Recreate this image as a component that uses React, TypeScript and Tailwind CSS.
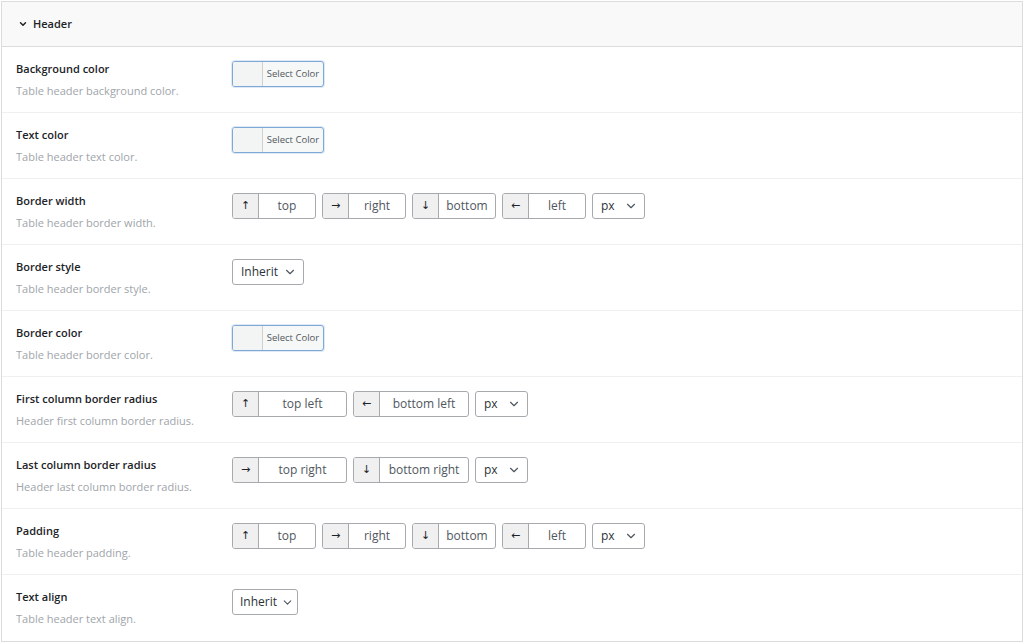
import React from 'react';
import { ChevronDown } from 'lucide-react';

type Side = { arrow: string; label: string; w: string };

const sides4: Side[] = [
  { arrow: '↑', label: 'top', w: 'w-[84px]' },
  { arrow: '→', label: 'right', w: 'w-[84px]' },
  { arrow: '↓', label: 'bottom', w: 'w-[84px]' },
  { arrow: '←', label: 'left', w: 'w-[84px]' },
];

const ColorButton = () => (
  <div className="flex h-[26px] w-[92px] overflow-hidden rounded-[3px] border border-[#7ea9d6] bg-[#f6f7f7] shadow-[0_0_0_1px_rgba(126,169,214,0.25)]">
    <div className="w-[30px] border-r border-[#d0d0d0] bg-[#f3f4f4]" />
    <div className="flex flex-1 items-center justify-center text-[9.5px] text-[#50575e]">Select Color</div>
  </div>
);

const Select = ({ value, w, tight }: { value: string; w: string; tight?: boolean }) => (
  <div className={`flex h-[26px] ${w} items-center justify-between rounded-[3px] border border-[#a7aaad] bg-white ${tight ? 'pl-[7px] pr-[3px]' : 'pl-2 pr-[6px]'} text-[12px] text-[#2c3338]`}>
    <span>{value}</span>
    <ChevronDown size={tight ? 13 : 14} strokeWidth={2} className="text-[#50575e]" />
  </div>
);

const SideInput = ({ side }: { side: Side }) => (
  <div className={`flex h-[26px] ${side.w} overflow-hidden rounded-[3px] border border-[#a7aaad] bg-white`}>
    <div className="flex w-[26px] items-center justify-center border-r border-[#a7aaad] bg-[#f0f0f1] text-[11px] text-[#1d2327] [font-family:'DejaVu_Sans',sans-serif]">
      {side.arrow}
    </div>
    <div className="flex flex-1 items-center justify-center text-[12px] text-[#50575e]">{side.label}</div>
  </div>
);

const Sides = ({ items }: { items: Side[] }) => (
  <div className="flex gap-[6px]">
    {items.map((s) => (
      <SideInput key={s.label} side={s} />
    ))}
    <Select value="px" w="w-[53px]" />
  </div>
);

const Row = ({ title, desc, children, last }: { title: string; desc: string; children: React.ReactNode; last?: boolean }) => (
  <div className={`flex h-[66px] pl-[14px] pt-[14px] ${last ? '' : 'border-b border-[#f0f0f1]'}`}>
    <div className="w-[216px]">
      <div className="text-[11px] leading-4 font-semibold text-[#1d2327]">{title}</div>
      <div className="mt-[6px] text-[11px] leading-4 text-[#a0a5aa]">{desc}</div>
    </div>
    <div>{children}</div>
  </div>
);

export default function App() {
  return (
    <div className="min-h-[643px] bg-white p-px [font-family:'Open_Sans',sans-serif]">
      <div className="w-[1022px] border border-[#dcdcde] bg-white">
        <div className="flex h-[45px] items-center gap-[5px] border-b border-[#dcdcde] bg-[#f9f9f9] pl-[16px] text-[11px] font-semibold text-[#1d2327]">
          <ChevronDown size={10} strokeWidth={3.5} />
          <span>Header</span>
        </div>
        <Row title="Background color" desc="Table header background color.">
          <ColorButton />
        </Row>
        <Row title="Text color" desc="Table header text color.">
          <ColorButton />
        </Row>
        <Row title="Border width" desc="Table header border width.">
          <Sides items={sides4} />
        </Row>
        <Row title="Border style" desc="Table header border style.">
          <Select value="Inherit" w="w-[72px]" />
        </Row>
        <Row title="Border color" desc="Table header border color.">
          <ColorButton />
        </Row>
        <Row title="First column border radius" desc="Header first column border radius.">
          <Sides
            items={[
              { arrow: '↑', label: 'top left', w: 'w-[115px]' },
              { arrow: '←', label: 'bottom left', w: 'w-[116px]' },
            ]}
          />
        </Row>
        <Row title="Last column border radius" desc="Header last column border radius.">
          <Sides
            items={[
              { arrow: '→', label: 'top right', w: 'w-[115px]' },
              { arrow: '↓', label: 'bottom right', w: 'w-[116px]' },
            ]}
          />
        </Row>
        <Row title="Padding" desc="Table header padding.">
          <Sides items={sides4} />
        </Row>
        <Row title="Text align" desc="Table header text align." last>
          <Select value="Inherit" w="w-[66px]" tight />
        </Row>
      </div>
    </div>
  );
}
